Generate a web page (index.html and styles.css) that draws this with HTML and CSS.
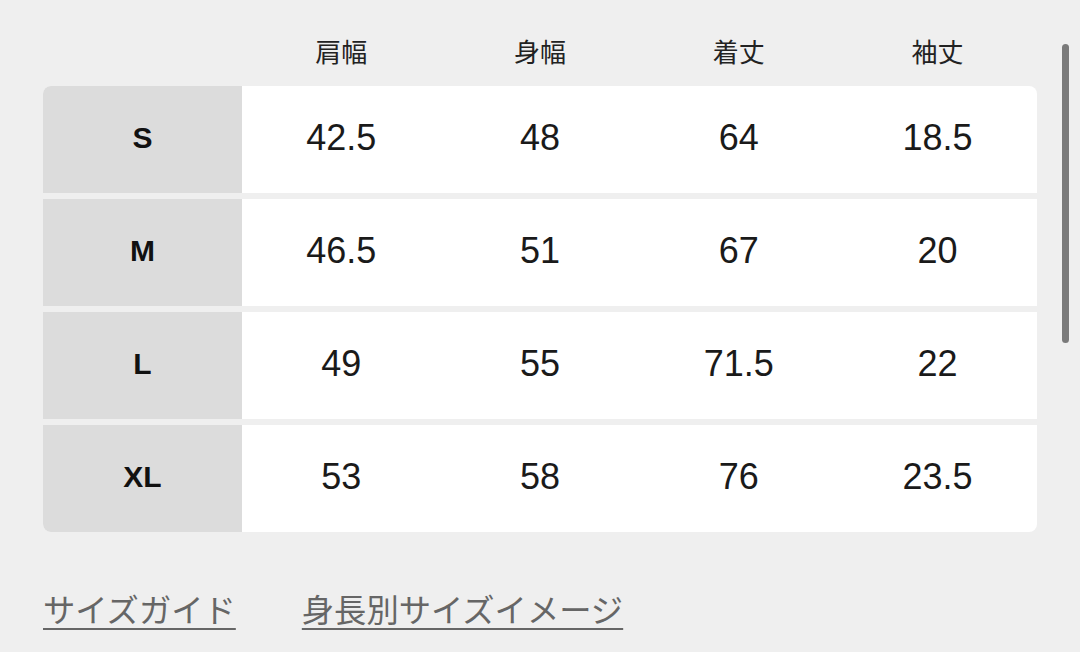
FILE: index.html
```html
<!DOCTYPE html>
<html lang="ja">
<head>
<meta charset="utf-8">
<link rel="stylesheet" href="styles.css">
</head>
<body>
<div class="page">
  <div class="head">
    <div></div>
    <div class="hcell">肩幅</div>
    <div class="hcell">身幅</div>
    <div class="hcell">着丈</div>
    <div class="hcell">袖丈</div>
  </div>
  <div class="table">
    <div class="row"><div class="size">S</div><div class="cell">42.5</div><div class="cell">48</div><div class="cell">64</div><div class="cell">18.5</div></div>
    <div class="row"><div class="size">M</div><div class="cell">46.5</div><div class="cell">51</div><div class="cell">67</div><div class="cell">20</div></div>
    <div class="row"><div class="size">L</div><div class="cell">49</div><div class="cell">55</div><div class="cell">71.5</div><div class="cell">22</div></div>
    <div class="row"><div class="size">XL</div><div class="cell">53</div><div class="cell">58</div><div class="cell">76</div><div class="cell">23.5</div></div>
  </div>
  <div class="links">
    <a class="link" href="#">サイズガイド</a>
    <a class="link" href="#">身長別サイズイメージ</a>
  </div>
</div>
<div class="scroll-thumb"></div>
</body>
</html>
```

FILE: styles.css
```css
html, body {
  margin: 0;
  padding: 0;
  background: #efefef;
  height: 100%;
  overflow: hidden;
}
.page {
  padding-left: 43px;
  width: 994px;
}
.head {
  display: grid;
  grid-template-columns: 199px repeat(4, 1fr);
  height: 86px;
  padding-top: 16px;
  box-sizing: border-box;
  align-items: center;
}
.hcell {
  text-align: center;
  font-family: "Noto Sans CJK JP", sans-serif;
  font-size: 26px;
  line-height: 36px;
  color: #222;
}
.table {
  display: flex;
  flex-direction: column;
  gap: 6px;
  border-radius: 8px;
  overflow: hidden;
}
.row {
  display: grid;
  grid-template-columns: 199px repeat(4, 1fr);
  height: 107px;
  background: #fff;
  align-items: center;
}
.size {
  background: #dcdcdc;
  height: 100%;
  display: flex;
  align-items: center;
  justify-content: center;
  padding-bottom: 3px;
  box-sizing: border-box;
  font-family: "Liberation Sans", Arial, sans-serif;
  font-weight: bold;
  font-size: 30px;
  color: #111;
}
.cell {
  text-align: center;
  padding-bottom: 3px;
  font-family: "Liberation Sans", Arial, sans-serif;
  font-size: 36px;
  color: #1a1a1a;
}
.links {
  display: flex;
  gap: 66px;
  margin-top: 56px;
}
.link {
  font-family: "Noto Sans CJK JP", sans-serif;
  font-size: 32.3px;
  line-height: 40px;
  color: #666;
  text-decoration: underline;
  text-decoration-thickness: 2px;
  text-underline-offset: 6px;
}
.scroll-thumb {
  position: absolute;
  left: 1062px;
  top: 44px;
  width: 7px;
  height: 299px;
  border-radius: 4px;
  background: #7a7a7a;
}
```
